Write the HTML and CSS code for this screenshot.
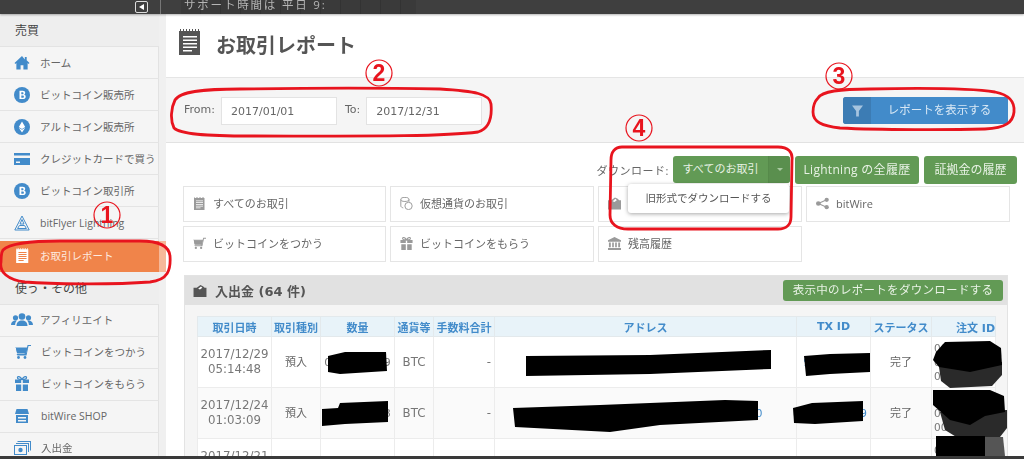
FILE: index.html
```html
<!DOCTYPE html>
<html lang="ja">
<head>
<meta charset="utf-8">
<title>お取引レポート</title>
<link rel="stylesheet" href="styles.css">
</head>
<body>
<svg class="defs" width="0" height="0" aria-hidden="true">
  <symbol id="i-report" viewBox="0 0 22 26"><path d="M0 2h1V0h1v2h2V0h1v2h2V0h1v2h2V0h1v2h2V0h1v2h2V0h1v2h2V0h1v2h1v24H0z" fill-rule="evenodd"/><path d="M4 7h14v1.600H4zM4 10.500h14v1.600H4zM4 14h14v1.600H4zM4 17.500h14v1.600H4zM4 21h9v1.600H4z" style="fill:var(--line,#fff)"/></symbol>
  <symbol id="i-home" viewBox="0 0 16 16"><path d="M8 1 0 8.500l1 1 1-.9V15.500h4.500v-4.500h3v4.500H14V8.600l1 .9 1-1-3-2.800V2h-2v2.800z"/></symbol>
  <symbol id="i-btc" viewBox="0 0 16 16"><circle cx="8" cy="8" r="8"/><path d="M5.500 3.800h3.200c1.600 0 2.500.8 2.500 2 0 .9-.5 1.500-1.200 1.800 1 .2 1.700 1 1.700 2.100 0 1.500-1.100 2.400-2.900 2.400H5.500zM7.300 5.200v2H8.500c.7 0 1-.4 1-1s-.4-1-1-1zM7.300 8.500v2.300H8.700c.8 0 1.200-.5 1.200-1.150 0-.7-.4-1.150-1.200-1.150z" fill="#fff" fill-rule="evenodd"/></symbol>
  <symbol id="i-eth" viewBox="0 0 16 16"><circle cx="8" cy="8" r="8"/><path d="M8 2.500 4.800 8 8 9.900 11.200 8zM4.800 8.800 8 13.500l3.200-4.700L8 10.700z" fill="#fff"/></symbol>
  <symbol id="i-card" viewBox="0 0 16 12"><path d="M0 0h16v2.500H0zM0 5h16v7H0zM2 8.500v1.500h4V8.500z" fill-rule="evenodd"/></symbol>
  <symbol id="i-tri" viewBox="0 0 16 16"><path d="M8 1 .8 15h14.400zM8 4.500l2 4.500H6zM5.400 10.500h5.200l1.800 3H3.600z" fill="none" stroke="currentColor" stroke-width="1"/></symbol>
  <symbol id="i-group" viewBox="0 0 22 13"><circle cx="11" cy="3.500" r="3.300"/><circle cx="4.500" cy="4.800" r="2.600"/><circle cx="17.500" cy="4.800" r="2.600"/><path d="M5.500 13c0-4 2.500-5.500 5.500-5.500s5.500 1.500 5.500 5.500zM0 12c0-3 2-4.500 4.500-4.500 .6 0 1 .1 1.300.2C4.700 8.800 4.200 10 4.100 12zM22 12c0-3-2-4.500-4.500-4.500-.6 0-1 .1-1.300.2 1.100 1.100 1.600 2.300 1.700 4.300z"/></symbol>
  <symbol id="i-cart" viewBox="0 0 16 14"><path d="M0 2.500h12l.6-2.500H16v1h-2.500L11.500 10.500H2.500L1.500 9h9zM1 3.500 2 8h9.200l1-4.500z" fill-rule="evenodd"/><path d="M1 3h11.500l-1.200 5.500H2.200z"/><circle cx="3.500" cy="12.500" r="1.400"/><circle cx="10" cy="12.500" r="1.400"/></symbol>
  <symbol id="i-gift" viewBox="0 0 14 15"><path d="M0 3.500h6.200V7H0zM7.800 3.500H14V7H7.800zM1 8.500h5.200V15H1zM7.800 8.500H13V15H7.800z"/><path d="M7 3.300C5 0 2.500 0 2.500 1.700S5 3.300 7 3.300 11.500 3.400 11.500 1.700 9 0 7 3.300z" fill="none" stroke="currentColor" stroke-width="1.300"/></symbol>
  <symbol id="i-shop" viewBox="0 0 14 14"><path d="M1.500 0h11L14 5H0zM1 6h12v8H1zM3 8v1.500h8V8zM3 11v1.500h8V11z" fill-rule="evenodd"/></symbol>
  <symbol id="i-wallet" viewBox="0 0 17 14"><path d="M3.500 0H17v9.500h-1V1H3.500zM2 2H15v9h-1V3H2z"/><path d="M0 4h13v10H0zM1 5v8h11V5z" fill-rule="evenodd"/><circle cx="6.500" cy="9" r="2.200"/></symbol>
  <symbol id="i-coins" viewBox="0 0 16 16"><ellipse cx="6" cy="3" rx="5" ry="2.500" fill="none" stroke="currentColor" stroke-width="1.200"/><path d="M1 3v8c0 1.200 1.500 2 3 2.400M11 3v3" fill="none" stroke="currentColor" stroke-width="1.200"/><circle cx="10.500" cy="11" r="4.500" fill="none" stroke="currentColor" stroke-width="1.200"/></symbol>
  <symbol id="i-box" viewBox="0 0 14 13"><path d="M0 3h3.500L7.500 0l3 1.500L12 3h2v10H0z"/><path d="M5 4 8 1.500 9.500 3 7 5z" fill="#fff"/></symbol>
  <symbol id="i-share" viewBox="0 0 14 13"><circle cx="2.500" cy="6.500" r="2.500"/><circle cx="11.500" cy="2.500" r="2.300"/><circle cx="11.500" cy="10.500" r="2.300"/><path d="M2.500 6.500l9-4M2.500 6.500l9 4" stroke="currentColor" stroke-width="1.200"/></symbol>
  <symbol id="i-bank" viewBox="0 0 14 14"><path d="M7 0l7 3.500V5H0V3.500zM1 6h2v5H1zM4.500 6h1.800v5H4.500zM7.700 6h1.800v5H7.700zM11 6h2v5h-2zM0 11.800h14V14H0z"/></symbol>
</svg>

<div class="page">
  <header class="topbar">
    <span class="toggle"></span>
    <span class="top-divider"></span>
    <span class="notice">サポート時間は 平日 9:</span>
  </header>
  <div class="layout">
    <aside class="sidebar">
      <div class="side-head">売買</div>
      <a class="side-item"><svg class="side-ic ic-home"><use href="#i-home"/></svg>ホーム</a>
      <a class="side-item"><svg class="side-ic ic-round"><use href="#i-btc"/></svg>ビットコイン販売所</a>
      <a class="side-item"><svg class="side-ic ic-round"><use href="#i-eth"/></svg>アルトコイン販売所</a>
      <a class="side-item"><svg class="side-ic ic-card"><use href="#i-card"/></svg>クレジットカードで買う</a>
      <a class="side-item"><svg class="side-ic ic-round"><use href="#i-btc"/></svg>ビットコイン取引所</a>
      <a class="side-item"><svg class="side-ic ic-tri"><use href="#i-tri"/></svg>bitFlyer Lightning</a>
      <a class="side-item is-active"><svg class="side-ic ic-doc"><use href="#i-report"/></svg>お取引レポート</a>
      <div class="side-head">使う・その他</div>
      <a class="side-item side-lower"><svg class="side-ic ic-group"><use href="#i-group"/></svg>アフィリエイト</a>
      <a class="side-item side-lower"><svg class="side-ic ic-cart"><use href="#i-cart"/></svg>ビットコインをつかう</a>
      <a class="side-item side-lower"><svg class="side-ic ic-gift"><use href="#i-gift"/></svg>ビットコインをもらう</a>
      <a class="side-item side-lower"><svg class="side-ic ic-shop"><use href="#i-shop"/></svg>bitWire SHOP</a>
      <a class="side-item side-lower"><svg class="side-ic ic-wallet"><use href="#i-wallet"/></svg>入出金</a>
    </aside>

    <main class="main">
      <div class="page-head">
        <svg class="head-ic"><use href="#i-report"/></svg>
        <h1 class="title">お取引レポート</h1>
      </div>

      <form class="filter">
        <label class="field-label">From:</label>
        <input class="date" value="2017/01/01">
        <label class="field-label field-to">To:</label>
        <input class="date" value="2017/12/31">
        <button class="show-btn" type="button">
          <span class="show-ic"><svg class="funnel" viewBox="0 0 12 12"><path d="M0 0h12L7.500 6v6h-3V6z"/></svg></span>
          <span class="show-text">レポートを表示する</span>
        </button>
      </form>

      <div class="downloads">
        <span class="dl-label">ダウンロード:</span>
        <div class="split">
          <span class="split-main">すべてのお取引</span>
          <span class="split-caret"></span>
          <div class="menu">旧形式でダウンロードする</div>
        </div>
        <a class="green-btn btn-lightning">Lightning の全履歴</a>
        <a class="green-btn btn-margin">証拠金の履歴</a>
      </div>

      <nav class="tiles">
        <a class="tile"><svg class="tile-ic"><use href="#i-report"/></svg>すべてのお取引</a>
        <a class="tile"><svg class="tile-ic"><use href="#i-coins"/></svg>仮想通貨のお取引</a>
        <a class="tile"><svg class="tile-ic"><use href="#i-box"/></svg>入出金</a>
        <a class="tile"><svg class="tile-ic"><use href="#i-share"/></svg>bitWire</a>
        <a class="tile"><svg class="tile-ic"><use href="#i-cart"/></svg>ビットコインをつかう</a>
        <a class="tile"><svg class="tile-ic"><use href="#i-gift"/></svg>ビットコインをもらう</a>
        <a class="tile"><svg class="tile-ic"><use href="#i-bank"/></svg>残高履歴</a>
      </nav>

      <section class="panel">
        <div class="panel-head">
          <svg class="panel-ic"><use href="#i-box"/></svg>
          <h2 class="panel-title">入出金 (64 件)</h2>
          <a class="green-btn panel-btn">表示中のレポートをダウンロードする</a>
        </div>
        <div class="panel-body">
          <table class="report">
            <colgroup>
              <col class="c1"><col class="c2"><col class="c3"><col class="c4"><col class="c5"><col class="c6"><col class="c7"><col class="c8"><col class="c9">
            </colgroup>
            <thead>
              <tr><th>取引日時</th><th>取引種別</th><th>数量</th><th>通貨等</th><th>手数料合計</th><th>アドレス</th><th>TX ID</th><th>ステータス</th><th class="th-order">注文 ID</th></tr>
            </thead>
            <tbody>
              <tr><td>2017/12/29<br>05:14:48</td><td class="ja">預入</td><td class="num">0.00000009</td><td>BTC</td><td class="fee">-</td><td class="link">3000000000000000000000000000000000</td><td class="link">900000009</td><td class="ja">完了</td><td class="order"><div class="order-text">000000000000000000000000000</div></td></tr>
              <tr><td>2017/12/24<br>01:03:09</td><td class="ja">預入</td><td class="num">0.00000008</td><td>BTC</td><td class="fee">-</td><td class="link">30000000000000000000000000000000000</td><td class="link">9000000009</td><td class="ja">完了</td><td class="order"><div class="order-text">000000000000000000000000000</div></td></tr>
              <tr><td>2017/12/21<br>00:00:00</td><td class="ja">預入</td><td class="num">0.00000000</td><td>BTC</td><td class="fee">-</td><td></td><td></td><td class="ja">完了</td><td class="order"><div class="order-text">0000000000000001</div></td></tr>
            </tbody>
          </table>
        </div>
      </section>
    </main>
  </div>
  <div class="bottom-edge"></div>

  <svg class="marks" viewBox="0 0 1024 459" aria-hidden="true">
    <g class="scribble">
      <path d="M328 356 345 352 386 352 387 371 340 374 328 372z"/>
      <path d="M322 409 338 408 340 403 388 401 388 422 345 424 322 426z"/>
      <path d="M526 356 650 355 771 350 771 369 650 374 526 376z"/>
      <path d="M513 408 600 405 725 400 758 401 758 420 660 425 610 432 515 427z"/>
      <path d="M804 356 830 354 870 353 870 372 830 374 806 376z"/>
      <path d="M793 408 812 403 863 401 863 421 815 424 794 423z"/>
      <path class="soft" d="M939 367 1002 362 1002 375 992 386 950 388 941 381z"/>
      <path d="M936 352 945 342 990 341 1001 348 1002 365 970 372 939 367 933 360z"/>
      <path class="soft" d="M940 412 1007 410 1007 428 1000 437 958 438 945 430z"/>
      <path d="M933 390 990 390 1004 396 1005 412 985 416 970 425 950 420 933 405z"/>
      <path d="M936 436 985 436 985 456 936 456z"/>
      <path class="fade" d="M985 437 1003 437 1005 456 985 456z"/>
    </g>
    <g class="ring">
      <path d="M3 250C10 243 30 241 60 241H140C160 241 169 246 170 256 171 270 168 280 150 282 110 285 50 284 25 282 8 280-1 272 1 262 1 256 1 253 3 250z"/>
      <path d="M175 100C180 91 205 89 240 89 310 88 390 88 440 89 475 91 490 94 491 104 492 115 491 128 478 132 440 137 350 136 250 136 205 136 180 134 174 128 170 120 171 108 175 100z"/>
      <path d="M818 98C822 91 840 89 870 89 920 88 970 88 995 92 1010 95 1015 102 1014 112 1013 122 1006 128 985 129 950 130 880 130 840 128 822 126 813 122 813 112 813 106 815 101 818 98z"/>
      <path d="M622 147H778C788 147 793 152 792 160L791 217C791 225 786 229 778 229H628C617 229 610 224 610 215L611 160C611 152 615 147 622 147z"/>
    </g>
    <g class="badge">
      <circle cx="107" cy="215" r="13"/><text x="107" y="223">1</text>
      <circle cx="379" cy="73" r="13"/><text x="379" y="81">2</text>
      <circle cx="839" cy="76" r="13"/><text x="839" y="84">3</text>
      <circle cx="639" cy="128" r="13"/><text x="639" y="136">4</text>
    </g>
  </svg>
</div>
</body>
</html>
```
FILE: styles.css
```css
* { box-sizing: border-box; }
html, body { margin: 0; height: 459px; overflow: hidden; background: #fff; }
body { font-family: "Open Sans", "Noto Sans CJK JP", sans-serif; color: #555; font-size: 11px; }
.defs { position: absolute; }
.page { position: relative; width: 1024px; height: 459px; overflow: hidden; filter: blur(0.45px); }
a { color: inherit; text-decoration: none; }

.topbar { height: 14px; background: #3f3f3f; display: flex; align-items: center; overflow: hidden; box-shadow: 0 1px 2px rgba(0,0,0,.3); position: relative; z-index: 2; }
.toggle { width: 13px; height: 12px; margin: 0 0 0 135px; border: 1px solid #ddd; border-radius: 2px; display: flex; align-items: center; justify-content: center; }
.toggle::before { content: ""; border: 3px solid transparent; border-right: 5px solid #fff; border-left: 0; }
.top-divider { width: 1px; height: 14px; margin-left: 12px; background: #777; }
.notice { margin-left: 20px; padding-left: 3px; width: 235px; height: 14px; line-height: 9px; font-size: 11.500px; letter-spacing: 1.800px; color: #b5b5b5; white-space: pre; background: repeating-linear-gradient(90deg, #3a3a3a 0 19px, #333 19px 20px); }

.layout { display: flex; height: 445px; }
.sidebar { width: 166px; flex: none; background: #f5f5f5; border-right: 7px solid #f0f0f0; box-shadow: inset -1px 0 0 #e2e2e2; }
.side-head { height: 33px; background: #eee; padding-left: 15px; line-height: 33px; font-size: 12px; color: #444; border-bottom: 1px solid #e3e3e3; }
.side-item { display: flex; align-items: center; height: 32px; font-size: 10.500px; color: #666; border-bottom: 1px solid #e4e4e4; padding-right: 2px; white-space: nowrap; }
.side-lower { padding-bottom: 2px; }
.side-ic { flex: none; fill: #428bca; color: #428bca; margin-left: 14px; margin-right: 10px; width: 16px; height: 16px; }
.ic-home { width: 16px; height: 15px; }
.ic-card { width: 16px; height: 12px; }
.ic-tri { height: 16px; }
.ic-doc { --line: #f0844a; width: 13px; height: 15px; fill: #fff; margin-left: 16px; margin-right: 11px; }
.ic-group { width: 22px; height: 13px; margin-left: 11px; margin-right: 7px; }
.ic-cart { margin-left: 15px; margin-right: 10px; height: 14px; }
.ic-gift { width: 14px; height: 15px; margin-left: 15px; margin-right: 12px; }
.ic-shop { width: 14px; height: 14px; margin-left: 15px; margin-right: 12px; }
.ic-wallet { width: 17px; height: 14px; margin-left: 14px; margin-right: 10px; }
.is-active { background: #f0844a; color: #fdebe0; border-bottom: 0; height: 31px; margin-top: 2px; padding-bottom: 2px; box-shadow: 7px 0 0 #f6b899; }

.main { flex: 1; min-width: 0; overflow: hidden; }
.page-head { height: 63px; display: flex; align-items: center; padding-left: 13px; }
.head-ic { width: 22px; height: 26px; fill: #555; margin-top: -7px; }
.title { margin: -3px 0 0 15px; font-size: 20px; font-weight: 700; color: #555; }

.filter { height: 66px; background: #f5f5f5; border-top: 1px solid #e5e5e5; border-bottom: 1px solid #e2e2e2; display: flex; align-items: flex-start; padding-top: 19px; padding-left: 18px; padding-right: 16px; }
.field-label { font: 11px/26px "DejaVu Sans", sans-serif; color: #666; margin-right: 6px; }
.field-to { margin-left: 8px; }
.date { width: 116px; height: 28px; border: 1px solid #e3e3e3; background: #fff; padding: 0 9px; font: 11px "DejaVu Sans", sans-serif; color: #666; }
.show-btn { margin-left: auto; margin-top: 0; width: 165px; height: 27px; padding: 0; display: flex; border: 0; border-radius: 3px; overflow: hidden; background: #428bca; color: #d8e8f5; font: 11.500px "Open Sans", "Noto Sans CJK JP", sans-serif; }
.show-ic { width: 28px; height: 27px; background: #3c7cb4; display: flex; align-items: center; justify-content: center; }
.funnel { width: 11px; height: 12px; fill: #a6c4df; }
.show-text { flex: 1; line-height: 26px; text-align: center; }

.downloads { display: flex; justify-content: flex-end; align-items: center; height: 29px; margin-top: 12px; padding-right: 7px; gap: 5px; }
.dl-label { color: #666; font-size: 11px; letter-spacing: .5px; margin-right: -1px; }
.split { position: relative; display: flex; height: 27px; width: 117px; background: #629a55; border-radius: 3px; color: #e8f2e5; }
.split-main { flex: 1; line-height: 26px; text-align: center; }
.split-caret { width: 22px; background: #5a8f4e; border-left: 1px solid #568a4a; border-radius: 0 3px 3px 0; display: flex; align-items: center; justify-content: center; }
.split-caret::before { content: ""; border: 3px solid transparent; border-top: 3px solid #a9c9a1; border-bottom: 0; }
.menu { position: absolute; z-index: 3; top: 28px; right: 1px; width: 161px; height: 29px; background: #fff; border-radius: 3px; box-shadow: 0 1px 4px rgba(0,0,0,.35); color: #555; text-align: center; line-height: 29px; font-size: 10.500px; }
.green-btn { display: block; height: 28px; line-height: 27px; border-radius: 3px; background: #629a55; color: #e8f2e5; font-size: 12px; white-space: nowrap; text-align: center; }
.btn-lightning { width: 124px; letter-spacing: .3px; }
.btn-margin { width: 93px; }

.tiles { display: grid; grid-template-columns: 203px 204px 204px 204px; grid-auto-rows: 36px; gap: 4px; margin: 2px 0 0 17px; }
.tile { display: flex; align-items: center; border: 1px solid #e5e5e5; padding: 0 0 2px 9px; font-size: 11px; color: #666; white-space: nowrap; }
.tile-ic { flex: none; width: 13px; height: 13px; margin-right: 7px; fill: #9a9a9a; color: #9a9a9a; }

.panel { margin: 13px 16px 0 18px; border: 1px solid #e3e3e3; }
.panel-head { height: 29px; background: #e1e1e1; display: flex; align-items: center; padding: 0 4px 0 8px; }
.panel-ic { width: 14px; height: 12px; fill: #555; }
.panel-title { margin: 0 0 0 8px; font: 700 13px "DejaVu Sans", "Noto Sans CJK JP", sans-serif; color: #555; }
.panel-btn { margin-left: auto; width: 220px; height: 21px; line-height: 20px; font-size: 11.500px; letter-spacing: .3px; }
.panel-body { background: #f5f5f5; padding: 11px 12px 0; height: 160px; }

.report { table-layout: fixed; width: 798px; border-collapse: collapse; background: #fff; font: 11.800px/15px "DejaVu Sans", "Noto Sans CJK JP", sans-serif; color: #777; }
.c1 { width: 74px; } .c2 { width: 49px; } .c3 { width: 74px; } .c4 { width: 39px; } .c5 { width: 61px; } .c6 { width: 302px; } .c7 { width: 74px; } .c8 { width: 61px; } .c9 { width: 64px; }
.report th { height: 20px; background: #e8f3f9; color: #428bca; font: 700 11px "DejaVu Sans", "Noto Sans CJK JP", sans-serif; padding: 0; border: 1px solid #e3e9ec; white-space: nowrap; overflow: hidden; }
.report .th-order { text-align: left; padding-left: 24px; }
.report td { height: 51px; padding: 0; text-align: center; border: 1px solid #ececec; overflow: hidden; }
.report tbody tr:nth-child(2) td { background: #fafafa; }
.report td.ja { font-size: 11px; color: #666; }
.report td.num { font-size: 11px; white-space: nowrap; }
.report td.fee { text-align: right; padding-right: 3px; }
.report td.link { color: #428bca; white-space: nowrap; font-size: 10.500px; }
.report td.order { text-align: left; font-size: 10.500px; padding: 0 2px; }
.order-text { height: 42px; line-height: 14px; overflow: hidden; word-break: break-all; }

.bottom-edge { position: absolute; left: 0; right: 0; bottom: 0; height: 3px; background: #3a3a3a; }
.marks { position: absolute; inset: 0; width: 1024px; height: 459px; z-index: 5; pointer-events: none; }
.scribble path { fill: #000; }
.scribble .soft { fill: #2a2a2a; }
.scribble .fade { fill: #555; }
.ring path { fill: none; stroke: #e8141e; stroke-width: 2.800; }
.badge circle { fill: none; stroke: #e8141e; stroke-width: 1.200; }
.badge text { fill: #e8141e; font: 700 23px "Liberation Sans", sans-serif; text-anchor: middle; }
```
